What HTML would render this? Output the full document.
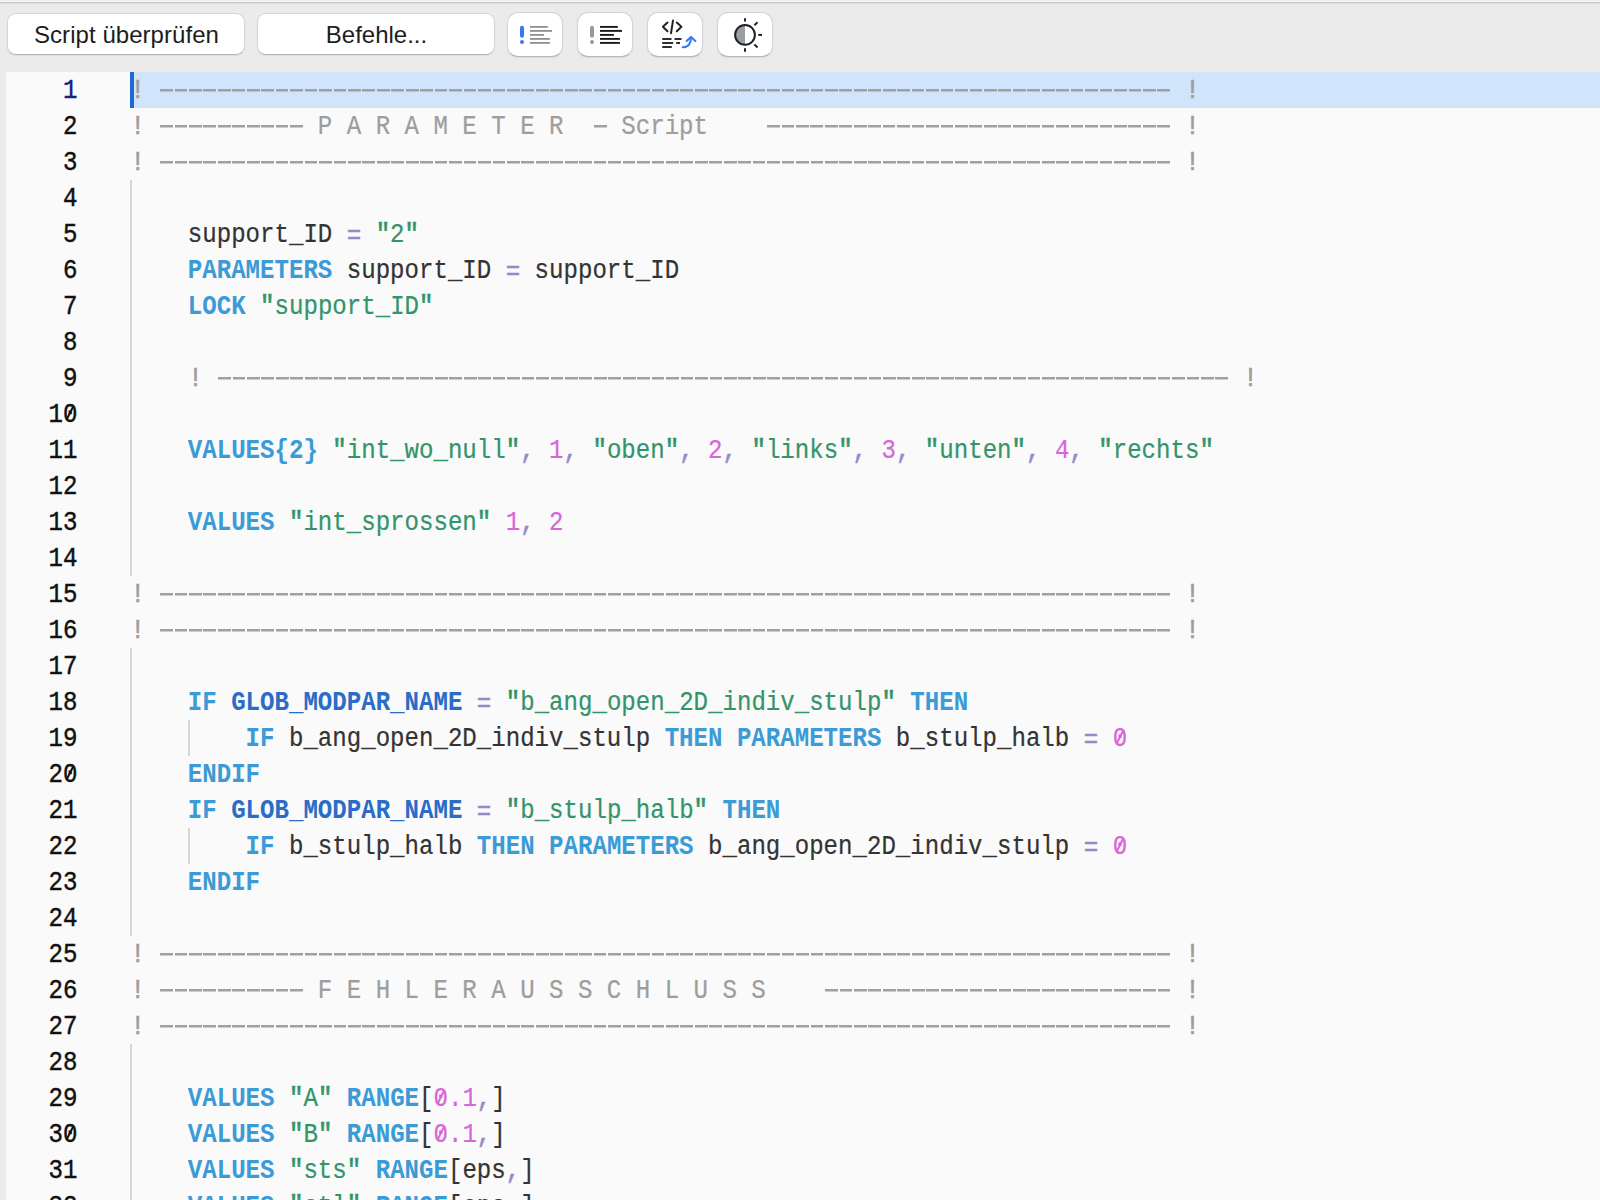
<!DOCTYPE html>
<html><head><meta charset="utf-8">
<style>
*{margin:0;padding:0;box-sizing:border-box}
html,body{width:1600px;height:1200px;overflow:hidden;background:#ebebeb;font-family:"Liberation Sans",sans-serif}
#topline{position:absolute;left:0;top:0;width:1600px;height:4px;background:linear-gradient(#f1f1f1 0,#f1f1f1 1px,#f4f4f4 1px,#f4f4f4 2px,#c6c6c6 2px,#c6c6c6 3px,#dfdfdf 3px,#dfdfdf 4px)}
.btn{position:absolute;top:13px;height:42px;background:#fff;border:1px solid #d5d5d5;border-bottom-color:#b6b6b6;border-radius:9px;box-shadow:0 1px 1.5px rgba(0,0,0,0.07);font-size:24px;color:#1d1d1d;text-align:center;line-height:41px}
.ibtn{position:absolute;top:12px;width:56px;height:45px;background:#fff;border:1px solid #d5d5d5;border-bottom-color:#b6b6b6;border-radius:11px;box-shadow:0 1px 1.5px rgba(0,0,0,0.07)}
.ibtn svg{position:absolute;left:0;top:0}
#editor{position:absolute;left:6px;top:72px;width:1594px;height:1128px;background:#fafafa;overflow:hidden}
#hl{position:absolute;left:124px;top:0;width:1470px;height:36px;background:#d0e4fc}
#cursor{position:absolute;left:124px;top:0;width:4px;height:36px;background:#1e6ad2}
.guide{position:absolute;width:2px;background:#d6d6d6}
#nums{position:absolute;left:0;top:0;width:71.5px;font-family:"Liberation Mono",monospace;font-size:24.09px;line-height:36px;text-align:right;color:#111}
#nums div{height:36px;transform:scaleY(1.12);transform-origin:0 7.9px}
#nums .cur{color:#14247a}
#code{position:absolute;left:124px;top:0;font-family:"Liberation Mono",monospace;font-size:24.09px;line-height:36px;color:#333}
.l{height:36px;white-space:pre;transform:scaleY(1.12);transform-origin:0 7.9px}
.c{color:#9d9d9d}
.k{color:#3c9bd6;font-weight:bold}
.g{color:#2a6cc6;font-weight:bold}
.s{color:#33946a}
.n{color:#d866d8}
.o{color:#958ac8}
.dash{position:absolute;height:36px;background:repeating-linear-gradient(to right,transparent 0,transparent 1.1px,#a0a0a0 1.1px,#a0a0a0 13.85px,transparent 13.85px,transparent 14.454px);background-size:100% 2.5px;background-position:0 17px;background-repeat:no-repeat}

.ex{-webkit-text-stroke:0.6px #9d9d9d;position:relative;left:0.5px}
.eq{position:relative;top:1.5px}
#nums div{-webkit-text-stroke:0.4px currentColor}
.l{-webkit-text-stroke-width:0.2px}
.k,.g{-webkit-text-stroke-width:0.05px}
.q{-webkit-text-stroke-width:0.6px}
.o{-webkit-text-stroke-width:0.5px}
.z{position:relative}
.z::after{content:"";position:absolute;left:6.1px;top:5.65px;width:2.2px;height:11.95px;background:currentColor;transform:rotate(29deg)}

</style></head><body>
<div id="topline"></div>
<div class="btn" style="left:7px;width:238px;padding-left:1px"><span style="letter-spacing:0.05px">Script überprüfen</span></div>
<div class="btn" style="left:257px;width:238px;padding-left:1px">Befehle...</div>
<div class="ibtn" style="left:507px"><svg width="54" height="43" viewBox="0 0 54 43">
<line x1="14" y1="14.8" x2="14" y2="22.7" stroke="#3478f6" stroke-width="4" stroke-linecap="round"/>
<circle cx="14" cy="29" r="2" fill="#3478f6"/>
<g stroke="#8e8e8e" stroke-width="1.8">
<line x1="22" y1="13.9" x2="39.8" y2="13.9"/><line x1="22" y1="17.9" x2="44" y2="17.9"/><line x1="22" y1="21.9" x2="35.9" y2="21.9"/><line x1="22" y1="25.9" x2="41.9" y2="25.9"/><line x1="22" y1="29.9" x2="41.9" y2="29.9"/>
</g></svg></div>
<div class="ibtn" style="left:577px"><svg width="54" height="43" viewBox="0 0 54 43">
<line x1="14" y1="14.8" x2="14" y2="22.7" stroke="#9a9a9a" stroke-width="4" stroke-linecap="round"/>
<circle cx="14" cy="29" r="2" fill="#9a9a9a"/>
<g stroke="#15191d" stroke-width="1.9">
<line x1="22" y1="13.9" x2="39.8" y2="13.9"/><line x1="22" y1="17.9" x2="44" y2="17.9"/><line x1="22" y1="21.9" x2="35.9" y2="21.9"/><line x1="22" y1="25.9" x2="41.9" y2="25.9"/><line x1="22" y1="29.9" x2="41.9" y2="29.9"/>
</g></svg></div>
<div class="ibtn" style="left:647px"><svg width="54" height="43" viewBox="0 0 54 43">
<g fill="none" stroke="#1f2226" stroke-width="2" stroke-linecap="round" stroke-linejoin="round">
<polyline points="19.5,9.5 14.9,13.8 19.5,18.2"/>
<line x1="25" y1="7.6" x2="23" y2="20.2"/>
<polyline points="28.8,9.5 33.4,13.8 28.8,18.2"/>
</g>
<g stroke="#15191d" stroke-width="1.8">
<line x1="14.2" y1="26" x2="23.5" y2="26"/><line x1="26.5" y1="26" x2="33.5" y2="26"/>
<line x1="14.2" y1="30" x2="25.2" y2="30"/><line x1="28.2" y1="30" x2="32" y2="30"/>
<line x1="14.2" y1="34" x2="23.8" y2="34"/>
</g>
<g fill="none" stroke="#3478f6" stroke-width="2" stroke-linecap="round" stroke-linejoin="round">
<path d="M34.6 34.2 C39.5 34.2 43 31.5 43 24.5"/>
<polyline points="38.6,28 43,23.9 47.4,28"/>
</g></svg></div>
<div class="ibtn" style="left:717px"><svg width="54" height="43" viewBox="0 0 54 43">
<path d="M27 12 A9.9 9.9 0 0 0 27 31.8 Z" fill="#9a9ea3"/>
<circle cx="27" cy="21.9" r="9.9" fill="none" stroke="#1e2226" stroke-width="2"/>
<g stroke="#1e2226" stroke-width="2">
<line x1="27" y1="5.2" x2="27" y2="8.6"/><line x1="27" y1="35.2" x2="27" y2="38.8"/><line x1="40.2" y1="21.9" x2="44" y2="21.9"/>
<line x1="36.4" y1="12.4" x2="39.5" y2="9.3"/><line x1="36.4" y1="31.4" x2="39.5" y2="34.5"/>
</g></svg></div>
<div id="editor">
<div id="hl"></div>
<div class="guide" style="left:124px;top:108px;height:396px"></div>
<div class="guide" style="left:124px;top:576px;height:288px"></div>
<div class="guide" style="left:124px;top:972px;height:200px"></div>
<div class="guide" style="left:182px;top:648px;height:36px"></div>
<div class="guide" style="left:182px;top:756px;height:36px"></div>
<div id="cursor"></div>
<div id="nums"><div class="cur">1</div><div>2</div><div>3</div><div>4</div><div>5</div><div>6</div><div>7</div><div>8</div><div>9</div><div>1<span class="z">0</span></div><div>11</div><div>12</div><div>13</div><div>14</div><div>15</div><div>16</div><div>17</div><div>18</div><div>19</div><div>2<span class="z">0</span></div><div>21</div><div>22</div><div>23</div><div>24</div><div>25</div><div>26</div><div>27</div><div>28</div><div>29</div><div>3<span class="z">0</span></div><div>31</div><div>32</div></div>
<div id="code">
<div class="l c"><span class="ex">!</span>                                                                        <span class="ex">!</span></div>
<div class="l c"><span class="ex">!</span>            P A R A M E T E R    Script                                 <span class="ex">!</span></div>
<div class="l c"><span class="ex">!</span>                                                                        <span class="ex">!</span></div>
<div class="l"></div>
<div class="l">    support_ID <span class="o eq">=</span> <span class="s"><span class="q">&quot;</span>2<span class="q">&quot;</span></span></div>
<div class="l">    <span class="k">PARAMETERS</span> support_ID <span class="o eq">=</span> support_ID</div>
<div class="l">    <span class="k">LOCK</span> <span class="s"><span class="q">&quot;</span>support_ID<span class="q">&quot;</span></span></div>
<div class="l"></div>
<div class="l c">    <span class="ex">!</span>                                                                        <span class="ex">!</span></div>
<div class="l"></div>
<div class="l">    <span class="k">VALUES{2}</span> <span class="s"><span class="q">&quot;</span>int_wo_null<span class="q">&quot;</span></span><span class="o">,</span> <span class="n">1</span><span class="o">,</span> <span class="s"><span class="q">&quot;</span>oben<span class="q">&quot;</span></span><span class="o">,</span> <span class="n">2</span><span class="o">,</span> <span class="s"><span class="q">&quot;</span>links<span class="q">&quot;</span></span><span class="o">,</span> <span class="n">3</span><span class="o">,</span> <span class="s"><span class="q">&quot;</span>unten<span class="q">&quot;</span></span><span class="o">,</span> <span class="n">4</span><span class="o">,</span> <span class="s"><span class="q">&quot;</span>rechts<span class="q">&quot;</span></span></div>
<div class="l"></div>
<div class="l">    <span class="k">VALUES</span> <span class="s"><span class="q">&quot;</span>int_sprossen<span class="q">&quot;</span></span> <span class="n">1</span><span class="o">,</span> <span class="n">2</span></div>
<div class="l"></div>
<div class="l c"><span class="ex">!</span>                                                                        <span class="ex">!</span></div>
<div class="l c"><span class="ex">!</span>                                                                        <span class="ex">!</span></div>
<div class="l"></div>
<div class="l">    <span class="k">IF</span> <span class="g">GLOB_MODPAR_NAME</span> <span class="o eq">=</span> <span class="s"><span class="q">&quot;</span>b_ang_open_2D_indiv_stulp<span class="q">&quot;</span></span> <span class="k">THEN</span></div>
<div class="l">        <span class="k">IF</span> b_ang_open_2D_indiv_stulp <span class="k">THEN</span> <span class="k">PARAMETERS</span> b_stulp_halb <span class="o eq">=</span> <span class="n"><span class="z">0</span></span></div>
<div class="l">    <span class="k">ENDIF</span></div>
<div class="l">    <span class="k">IF</span> <span class="g">GLOB_MODPAR_NAME</span> <span class="o eq">=</span> <span class="s"><span class="q">&quot;</span>b_stulp_halb<span class="q">&quot;</span></span> <span class="k">THEN</span></div>
<div class="l">        <span class="k">IF</span> b_stulp_halb <span class="k">THEN</span> <span class="k">PARAMETERS</span> b_ang_open_2D_indiv_stulp <span class="o eq">=</span> <span class="n"><span class="z">0</span></span></div>
<div class="l">    <span class="k">ENDIF</span></div>
<div class="l"></div>
<div class="l c"><span class="ex">!</span>                                                                        <span class="ex">!</span></div>
<div class="l c"><span class="ex">!</span>            F E H L E R A U S S C H L U S S                             <span class="ex">!</span></div>
<div class="l c"><span class="ex">!</span>                                                                        <span class="ex">!</span></div>
<div class="l"></div>
<div class="l">    <span class="k">VALUES</span> <span class="s"><span class="q">&quot;</span>A<span class="q">&quot;</span></span> <span class="k">RANGE</span>[<span class="n"><span class="z">0</span>.1</span><span class="o">,</span>]</div>
<div class="l">    <span class="k">VALUES</span> <span class="s"><span class="q">&quot;</span>B<span class="q">&quot;</span></span> <span class="k">RANGE</span>[<span class="n"><span class="z">0</span>.1</span><span class="o">,</span>]</div>
<div class="l">    <span class="k">VALUES</span> <span class="s"><span class="q">&quot;</span>sts<span class="q">&quot;</span></span> <span class="k">RANGE</span>[eps<span class="o">,</span>]</div>
<div class="l">    <span class="k">VALUES</span> <span class="s"><span class="q">&quot;</span>stl<span class="q">&quot;</span></span> <span class="k">RANGE</span>[eps<span class="o">,</span>]</div>
</div>
<div class="dash" style="left:152.91px;top:0px;width:1011.78px"></div>
<div class="dash" style="left:152.91px;top:36px;width:144.54px"></div>
<div class="dash" style="left:586.53px;top:36px;width:14.45px"></div>
<div class="dash" style="left:759.98px;top:36px;width:404.71px"></div>
<div class="dash" style="left:152.91px;top:72px;width:1011.78px"></div>
<div class="dash" style="left:210.72px;top:288px;width:1011.78px"></div>
<div class="dash" style="left:152.91px;top:504px;width:1011.78px"></div>
<div class="dash" style="left:152.91px;top:540px;width:1011.78px"></div>
<div class="dash" style="left:152.91px;top:864px;width:1011.78px"></div>
<div class="dash" style="left:152.91px;top:900px;width:144.54px"></div>
<div class="dash" style="left:817.79px;top:900px;width:346.90px"></div>
<div class="dash" style="left:152.91px;top:936px;width:1011.78px"></div>
</div>
</body></html>
